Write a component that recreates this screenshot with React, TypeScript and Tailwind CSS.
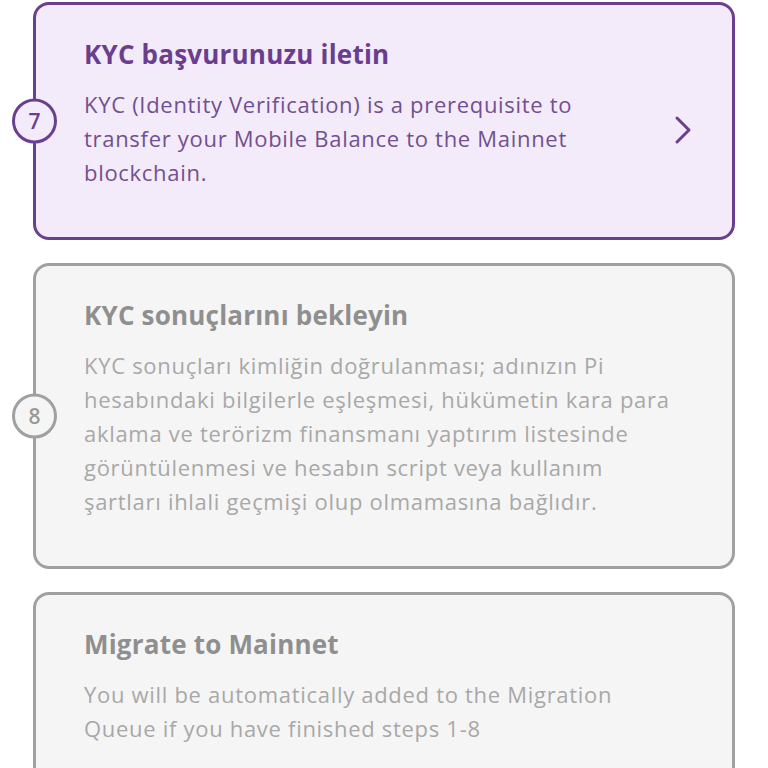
import React from "react";

interface Step {
  number: number;
  title: string;
  lines: string[];
  active?: boolean;
}

const steps: Step[] = [
  {
    number: 7,
    title: "KYC başvurunuzu iletin",
    lines: [
      "KYC (Identity Verification) is a prerequisite to",
      "transfer your Mobile Balance to the Mainnet",
      "blockchain.",
    ],
    active: true,
  },
  {
    number: 8,
    title: "KYC sonuçlarını bekleyin",
    lines: [
      "KYC sonuçları kimliğin doğrulanması; adınızın Pi",
      "hesabındaki bilgilerle eşleşmesi, hükümetin kara para",
      "aklama ve terörizm finansmanı yaptırım listesinde",
      "görüntülenmesi ve hesabın script veya kullanım",
      "şartları ihlali geçmişi olup olmamasına bağlıdır.",
    ],
  },
  {
    number: 9,
    title: "Migrate to Mainnet",
    lines: [
      "You will be automatically added to the Migration",
      "Queue if you have finished steps 1-8",
    ],
  },
];

function StepCard({ step, showNumber }: { step: Step; showNumber: boolean }) {
  const active = step.active;
  return (
    <div
      className={`relative flex items-center rounded-[16px] border-[3px] pl-[48px] pt-[33px] pb-[48px] ${
        active
          ? "border-[#6b3f8f] bg-[#f3ebfa]"
          : "border-[#a0a0a0] bg-[#f5f5f5]"
      }`}
    >
      {showNumber && (
        <div
          className={`absolute left-[-24px] top-1/2 -translate-y-1/2 flex h-[45px] w-[45px] items-center justify-center rounded-full border-[3px] text-[21px] font-semibold ${
            active
              ? "border-[#6b3f8f] bg-[#f3ebfa] text-[#6b3f8f]"
              : "border-[#a0a0a0] bg-[#f5f5f5] text-[#999999]"
          }`}
        >
          {step.number}
        </div>
      )}
      <div>
        <h2
          className={`text-[26px] font-bold leading-[32px] tracking-[0.2px] ${
            active ? "text-[#6b3d8f]" : "text-[#8f8f8f]"
          }`}
        >
          {step.title}
        </h2>
        <p
          className={`mt-[17px] text-[22px] leading-[34px] tracking-[0.7px] ${
            active ? "text-[#72508f]" : "text-[#a8a8a8]"
          }`}
        >
          {step.lines.map((line) => (
            <span key={line} className="block whitespace-nowrap">
              {line}
            </span>
          ))}
        </p>
      </div>
      {active && (
        <div className="ml-auto mr-[40px] mt-[32px]">
          <svg width="18" height="30" viewBox="0 0 18 30" fill="none">
            <path
              d="M3 3 L15 15 L3 27"
              stroke="#6b3f8f"
              strokeWidth="3"
              strokeLinecap="round"
              strokeLinejoin="round"
            />
          </svg>
        </div>
      )}
    </div>
  );
}

export default function App() {
  return (
    <div
      className="h-[768px] overflow-hidden bg-white px-[33px] pt-[2px]"
      style={{ fontFamily: "'Open Sans', 'Noto Sans', sans-serif" }}
    >
      <div className="flex flex-col gap-[23px]">
        {steps.map((s, i) => (
          <StepCard key={s.number} step={s} showNumber={i < 2} />
        ))}
      </div>
    </div>
  );
}
